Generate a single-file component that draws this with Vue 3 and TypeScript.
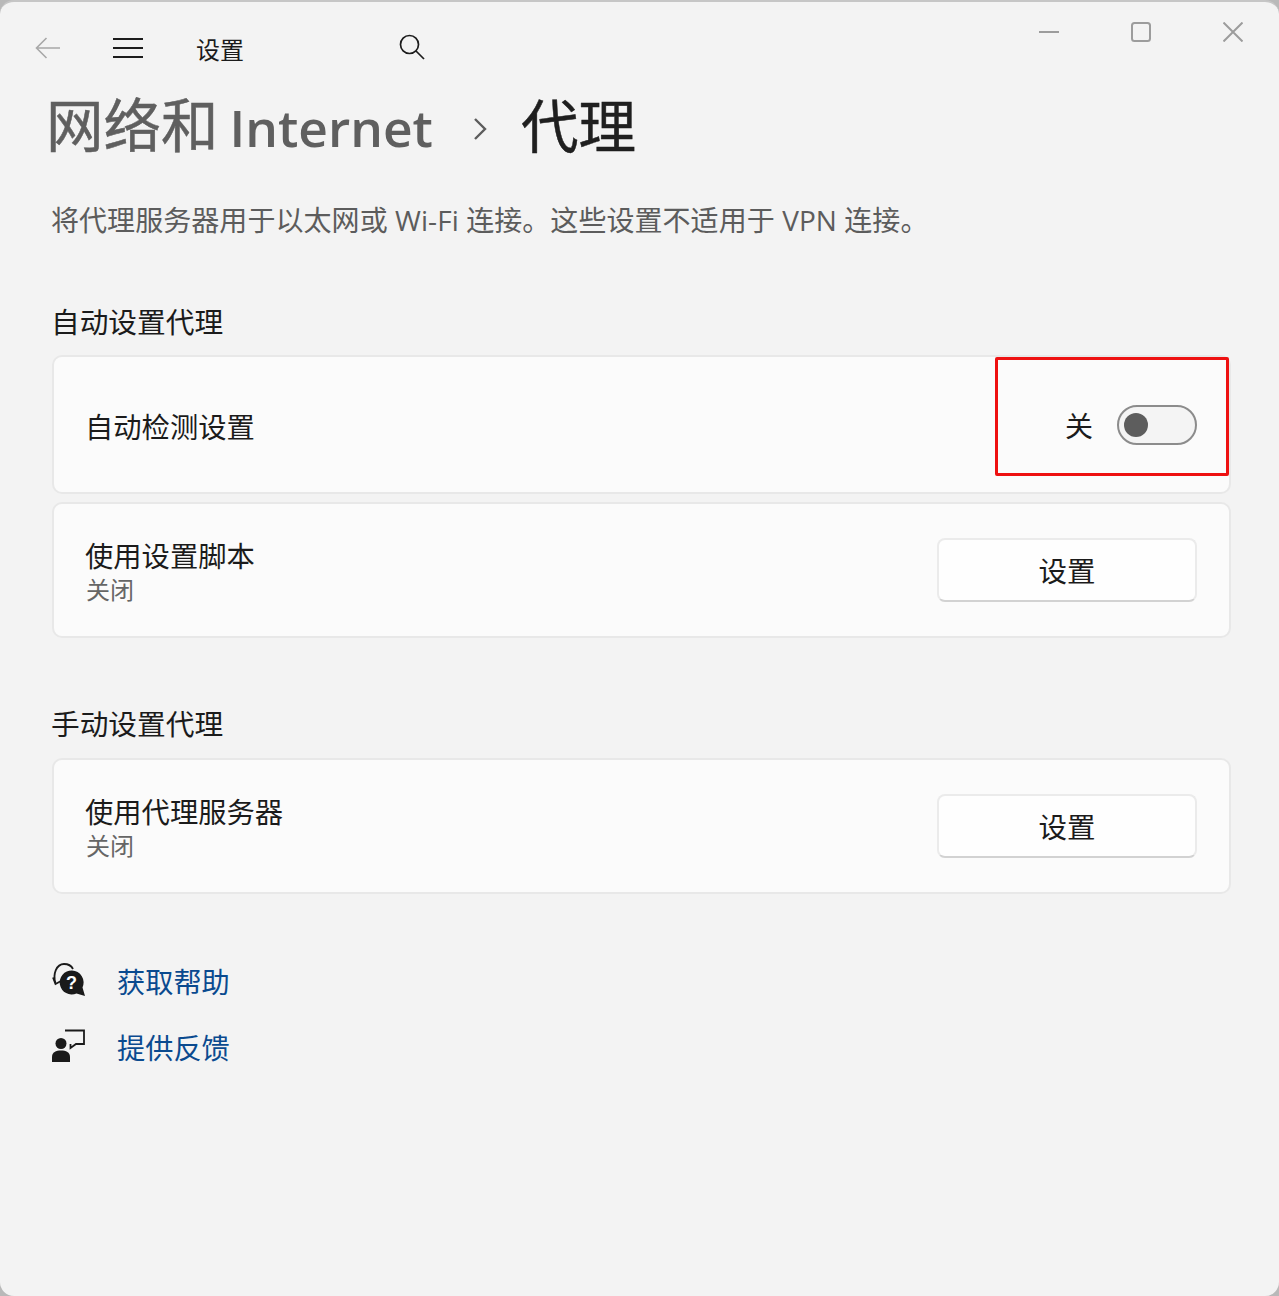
<script setup lang="ts">
interface Row { title: string; sub: string }
const scriptRow: Row = { title: '使用设置脚本', sub: '关闭' }
const manualRow: Row = { title: '使用代理服务器', sub: '关闭' }
</script>

<template>
  <div class="window">
    <header class="titlebar">
      <svg class="back" width="26" height="22" viewBox="0 0 26 22" fill="none" stroke="#a8a8a8" stroke-width="1.6">
        <path d="M1.500 11H25M11.500 1 1.500 11l10 10" />
      </svg>
      <svg class="menu" width="30" height="22" viewBox="0 0 30 22" fill="none" stroke="#1c1c1c" stroke-width="2">
        <path d="M0 2H30M0 11H30M0 20H30" />
      </svg>
      <span class="app">设置</span>
      <svg class="search" width="26" height="26" viewBox="0 0 26 26" fill="none" stroke="#1c1c1c" stroke-width="1.7">
        <circle cx="10.500" cy="10.500" r="9" />
        <path d="M17 17l8 8" />
      </svg>
      <div class="controls">
        <svg width="20" height="4" viewBox="0 0 20 4" fill="none" stroke="#9c9c9c" stroke-width="2"><path d="M0 2H20" /></svg>
        <svg class="max" width="20" height="20" viewBox="0 0 20 20" fill="none" stroke="#9c9c9c" stroke-width="2"><rect x="1" y="1" width="18" height="18" rx="2.500" /></svg>
        <svg width="20" height="20" viewBox="0 0 20 20" fill="none" stroke="#9c9c9c" stroke-width="2"><path d="M.5.5l19 19M19.500.5l-19 19" /></svg>
      </div>
    </header>

    <div class="crumb">
      <span class="parent">网络和<span class="latin">Internet</span></span>
      <svg class="chev" width="14" height="24" viewBox="0 0 14 24" fill="none" stroke="#5c5c5c" stroke-width="2.400"><path d="M2 2l10 10L2 22" /></svg>
      <span class="current">代理</span>
    </div>

    <p class="desc">将代理服务器用于以太网或 Wi-Fi 连接。这些设置不适用于 VPN 连接。</p>

    <h2 class="section">自动设置代理</h2>
    <div class="card card-auto">
      <span class="label auto-label">自动检测设置</span>
      <div class="toggle-wrap">
        <span class="state">关</span>
        <span class="toggle"><i class="knob"></i></span>
      </div>
      <div class="highlight"></div>
    </div>
    <div class="card card-script">
      <div class="stack">
        <span class="label">{{ scriptRow.title }}</span>
        <span class="sub">{{ scriptRow.sub }}</span>
      </div>
      <button class="btn">设置</button>
    </div>

    <h2 class="section second">手动设置代理</h2>
    <div class="card card-script">
      <div class="stack">
        <span class="label">{{ manualRow.title }}</span>
        <span class="sub">{{ manualRow.sub }}</span>
      </div>
      <button class="btn">设置</button>
    </div>

    <div class="links">
      <div class="link">
        <svg class="icon" width="34" height="34" viewBox="0 0 34 34">
          <path d="M3.500 20C.5 11 4.500 1 12 1c4 0 7.500 2 9 5" fill="none" stroke="#1a1a1a" stroke-width="1.800" />
          <path d="M1 14.500 3.500 21 9 18" fill="none" stroke="#1a1a1a" stroke-width="1.800" />
          <path d="M20 7.500a12 12 0 1 0 4.500 23L33 33l-2.500-8.500A12 12 0 0 0 20 7.500Z" fill="#1a1a1a" />
          <text x="19.500" y="26" class="q">?</text>
        </svg>
        <a class="anchor">获取帮助</a>
      </div>
      <div class="link">
        <svg class="icon" width="34" height="34" viewBox="0 0 34 34">
          <path d="M13 1.500H32V15H24L18.500 19V15" fill="none" stroke="#1a1a1a" stroke-width="1.800" />
          <circle cx="9" cy="14.500" r="5.500" fill="#1a1a1a" />
          <path d="M0 33V28C0 23 4 21.500 9 21.500s9 1.500 9 6.500v5Z" fill="#1a1a1a" />
        </svg>
        <a class="anchor">提供反馈</a>
      </div>
    </div>
  </div>
</template>

<style>
html, body { margin: 0; background: #b9b9b9; }
</style>

<style scoped>
.window {
  box-sizing: border-box;
  width: 1279px;
  height: 1296px;
  background: #f3f3f3;
  border-top: 2px solid #c6c6c6;
  border-radius: 14px;
  overflow: hidden;
  padding: 0 48px 0 52px;
  font-family: "Open Sans", "Noto Sans CJK SC", sans-serif;
  color: #1b1b1b;
}
.titlebar {
  position: relative;
  height: 78px;
  display: flex;
  align-items: center;
  margin-left: -52px;
  margin-right: -48px;
  padding-left: 35px;
}
.back { margin-top: 14px; }
.menu { margin-left: 52px; margin-top: 14px; }
.app { margin-left: 53px; margin-top: 18px; font-size: 24px; line-height: 32px; }
.search { margin-left: 155px; margin-top: 12px; }
.controls {
  position: absolute;
  top: 20px;
  right: 36px;
  display: flex;
  align-items: center;
  gap: 72px;
}
.crumb {
  display: flex;
  align-items: center;
  height: 80px;
  margin-top: 6px;
  margin-left: -6px;
  line-height: 80px;
}
.parent { font-size: 57.5px; color: #5f5f5f; font-weight: 400; -webkit-text-stroke: .5px #5f5f5f; white-space: nowrap; }
.latin { font-size: 51.5px; font-weight: 600; margin-left: 11px; -webkit-text-stroke: 0; }
.chev { margin-left: 40px; margin-top: 6px; }
.current { margin-left: 34px; font-size: 57.5px; color: #1f1f1f; font-weight: 400; -webkit-text-stroke: .5px #1f1f1f; }
.desc { margin: 32px 0 0 -1px; font-size: 28px; letter-spacing: .06px; line-height: 44px; color: #5c5c5c; white-space: nowrap; }
.section { margin: 57px 0 0 -1px; font-size: 28.7px; font-weight: 400; line-height: 46px; height: 56px; }
.section.second { margin-top: 63px; height: 57px; }
.card {
  position: relative;
  box-sizing: border-box;
  display: flex;
  align-items: center;
  justify-content: space-between;
  background: #fbfbfb;
  border: 2px solid #e8e8e8;
  border-radius: 10px;
  padding: 0 32px 0 31px;
}
.card-auto { height: 139px; margin-bottom: 8px; }
.card-script { height: 136px; }
.label { font-size: 28.3px; line-height: 36px; }
.auto-label { margin-top: 4px; }
.stack { display: flex; flex-direction: column; margin-top: 3px; }
.sub { font-size: 24px; line-height: 32px; color: #666; margin-left: 1px; }
.toggle-wrap { display: flex; align-items: center; gap: 24px; }
.state { font-size: 28px; line-height: 36px; margin-top: 2px; }
.toggle {
  box-sizing: border-box;
  display: flex;
  align-items: center;
  width: 80px;
  height: 40px;
  padding-left: 5px;
  background: #f4f4f4;
  border: 2px solid #8c8c8c;
  border-radius: 20px;
}
.knob { width: 24px; height: 24px; border-radius: 50%; background: #5d5d5d; }
.highlight {
  position: absolute;
  left: 941px;
  top: 0;
  width: 234px;
  height: 119px;
  box-sizing: border-box;
  border: 3px solid #ee1111;
  border-radius: 2px;
  pointer-events: none;
}
.btn {
  box-sizing: border-box;
  width: 260px;
  height: 64px;
  background: #fefefe;
  border: 2px solid #ebebeb;
  border-bottom-color: #d2d2d2;
  border-radius: 8px;
  font-family: inherit;
  font-size: 28.5px;
  color: #1b1b1b;
  line-height: 36px;
  padding: 2px 0 0;
}
.links { margin-top: 66px; display: flex; flex-direction: column; gap: 22px; }
.link { display: flex; align-items: center; gap: 31px; height: 44px; }
.icon { margin-top: -4px; }
.anchor { font-size: 28.2px; line-height: 44px; color: #0a4a8f; }
.q { font-family: "Liberation Sans", sans-serif; font-size: 18px; font-weight: 700; fill: #fff; text-anchor: middle; }
</style>
